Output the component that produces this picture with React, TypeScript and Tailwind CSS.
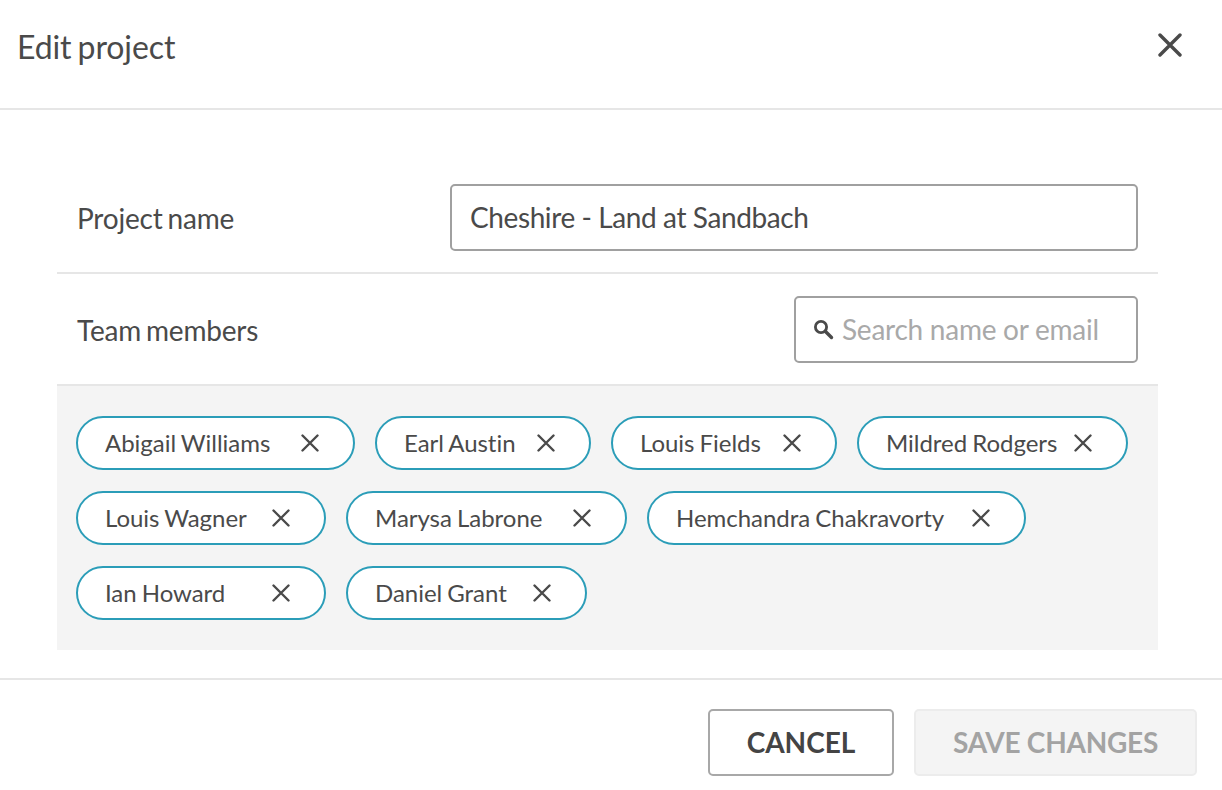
const members = [
  { name: 'Abigail Williams', width: 'w-[279px]' },
  { name: 'Earl Austin', width: 'w-[216px]' },
  { name: 'Louis Fields', width: 'w-[226px]' },
  { name: 'Mildred Rodgers', width: 'w-[271px]' },
  { name: 'Louis Wagner', width: 'w-[250px]' },
  { name: 'Marysa Labrone', width: 'w-[281px]' },
  { name: 'Hemchandra Chakravorty', width: 'w-[379px]' },
  { name: 'Ian Howard', width: 'w-[250px]' },
  { name: 'Daniel Grant', width: 'w-[241px]' },
];

function CloseIcon({ size, stroke }: { size: number; stroke: number }) {
  return (
    <svg width={size} height={size} viewBox="0 0 24 24" fill="none" className="shrink-0">
      <path d="M2 2L22 22M22 2L2 22" stroke="#4a4a4a" strokeWidth={stroke} strokeLinecap="round" />
    </svg>
  );
}

function SearchIcon() {
  return (
    <svg width="21" height="21" viewBox="0 0 21 21" fill="none" className="shrink-0">
      <circle cx="8" cy="8" r="5.6" stroke="#4a4a4a" strokeWidth="2.8" />
      <path d="M12.5 12.5L18.5 18.5" stroke="#4a4a4a" strokeWidth="3.4" strokeLinecap="round" />
    </svg>
  );
}

export default function App() {
  return (
    <div className="w-[1222px] h-[790px] bg-white font-['Lato',sans-serif] text-[#4a4a4a] overflow-hidden [word-spacing:-2px]">
      {/* Header */}
      <div className="h-[110px] flex items-start justify-between border-b-2 border-[#e6e6e6] pl-[17px] pr-[40px]">
        <h1 className="text-[32px] leading-[36px] mt-[29px] font-normal tracking-[-0.1px]">Edit project</h1>
        <button className="mt-[33px]">
          <CloseIcon size={24} stroke={3.4} />
        </button>
      </div>

      {/* Form */}
      <div className="ml-[57px] w-[1101px] mt-[74px]">
        <div className="h-[90px] flex items-start justify-between border-b-2 border-[#e6e6e6] px-[20px]">
          <label className="text-[28px] leading-[32px] mt-[18px] tracking-[-0.2px]">Project name</label>
          <input
            readOnly
            value="Cheshire - Land at Sandbach"
            className="w-[688px] h-[67px] border-2 border-[#a0a0a0] rounded-[5px] px-[18px] text-[28px] outline-none pb-[2px] tracking-[-0.4px]"
          />
        </div>

        <div className="h-[112px] pt-[22px] flex items-start justify-between border-b-2 border-[#e6e6e6] px-[20px]">
          <label className="text-[28px] leading-[32px] mt-[18px] tracking-[-0.2px]">Team members</label>
          <div className="w-[344px] h-[67px] border-2 border-[#a0a0a0] rounded-[5px] flex items-center pl-[17px] gap-[8px]">
            <SearchIcon />
            <input
              readOnly
              placeholder="Search name or email"
              className="w-[280px] text-[28px] outline-none placeholder:text-[#a9a9a9] bg-transparent tracking-[-0.25px] pb-[2px]"
            />
          </div>
        </div>

        {/* Members */}
        <div className="h-[264px] bg-[#f4f4f4] pt-[30px] pl-[19px] pr-[20px] flex flex-wrap content-start gap-x-[20px] gap-y-[21px]">
          {members.map((m) => (
            <div
              key={m.name}
              className={`${m.width} h-[54px] bg-white border-2 border-[#2b9db8] rounded-full flex items-center justify-between pl-[27px] pr-[34px]`}
            >
              <span className="text-[24px] whitespace-nowrap [word-spacing:-1px] tracking-[-0.03px]">{m.name}</span>
              <CloseIcon size={18} stroke={3.2} />
            </div>
          ))}
        </div>
      </div>

      {/* Footer */}
      <div className="mt-[28px] h-[112px] border-t-2 border-[#e6e6e6] flex items-start justify-end gap-[20px] pt-[29px] pr-[25px]">
        <button className="w-[186px] h-[67px] border-2 border-[#a8a8a8] rounded-[5px] bg-white text-[28px] font-bold text-[#444444] pb-[2px]">
          CANCEL
        </button>
        <button className="w-[283px] h-[67px] border-2 border-[#ececec] rounded-[5px] bg-[#f4f4f4] text-[28px] font-bold text-[#a3a3a3] pb-[2px] tracking-[-0.25px]">
          SAVE CHANGES
        </button>
      </div>
    </div>
  );
}
